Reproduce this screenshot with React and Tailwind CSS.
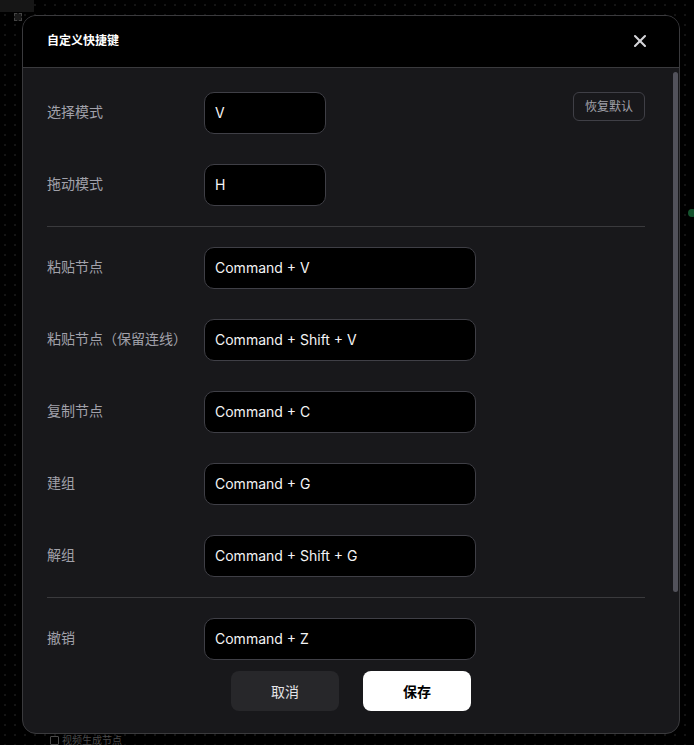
import { X } from 'lucide-react';

const groups = [
    [
        { label: '选择模式', value: 'V', short: true },
        { label: '拖动模式', value: 'H', short: true },
    ],
    [
        { label: '粘贴节点', value: 'Command + V' },
        { label: '粘贴节点（保留连线）', value: 'Command + Shift + V' },
        { label: '复制节点', value: 'Command + C' },
        { label: '建组', value: 'Command + G' },
        { label: '解组', value: 'Command + Shift + G' },
    ],
    [
        { label: '撤销', value: 'Command + Z' },
    ],
];

function Row({ label, value, short }) {
    return (
        <div className="flex items-center h-[42px]">
            <div className="w-[157px] shrink-0 pb-[4px] text-[14px] text-[#a1a1aa]">{label}</div>
            <div
                className={`${short ? 'w-[122px]' : 'w-[272px]'} h-[42px] flex items-center px-[10px] pb-[2px] bg-black border border-[#3f3f46] rounded-[10px] text-[14px] text-[#f4f4f5]`}
            >
                {value}
            </div>
        </div>
    );
}

export default function App() {
    return (
        <div
            className="relative w-[694px] h-[745px] overflow-hidden bg-black bg-[radial-gradient(#141414_1px,transparent_1px)] bg-[size:10px_10px]"
            style={{ fontFamily: 'Inter, "Noto Sans CJK SC", sans-serif' }}
        >
            {/* canvas bits behind the dialog */}
            <div className="absolute left-0 top-0 w-[34px] h-[12px] bg-[#161616]" />
            <div className="absolute left-[14px] top-[13px] w-[8px] h-[8px] border border-dashed border-[#444] bg-[#1a1a1a]" />
            <div className="absolute left-[50px] top-[734px] flex items-center gap-[3px] text-[10px] leading-[12px] text-[#4a4a4a]">
                <span className="w-[9px] h-[9px] border border-[#4a4a4a] rounded-[1px]" />
                视频生成节点
            </div>
            <div className="absolute left-[688px] top-[209px] w-[8px] h-[8px] rounded-full bg-[#14532d]" />

            <div className="relative ml-[22px] mt-[15px] w-[658px] h-[719px] flex flex-col rounded-[14px] border border-[#3a3a3d] bg-[#18181b] overflow-hidden">
                <div className="h-[52px] shrink-0 flex items-center justify-between pl-[24px] pr-[29px] pb-[2px] bg-black border-b border-[#3a3a3d]">
                    <span className="text-[12px] font-semibold text-white">自定义快捷键</span>
                    <X size={20} strokeWidth={2.5} className="text-[#d4d4d8]" />
                </div>

                <div className="relative h-[593px] shrink-0 overflow-hidden">
                    <div className="pl-[24px] pr-[34px] pt-[24px]">
                        {groups.map((rows, gi) => (
                            <div key={gi}>
                                {gi > 0 && <div className="my-[20px] h-px bg-[#3a3a3d]" />}
                                <div className="relative flex flex-col gap-[30px]">
                                    {rows.map((r) => (
                                        <Row key={r.label} {...r} />
                                    ))}
                                    {gi === 0 && (
                                        <button className="absolute right-0 top-0 h-[29px] w-[72px] rounded-[6px] border border-[#3f3f46] text-[12px] text-[#a1a1aa]">
                                            恢复默认
                                        </button>
                                    )}
                                </div>
                            </div>
                        ))}
                    </div>
                    <div className="absolute right-[1px] top-[4px] w-[5px] h-[520px] rounded-full bg-[#52525b]" />
                </div>

                <div className="flex justify-center gap-[24px] pt-[10px]">
                    <button className="w-[108px] h-[40px] rounded-[8px] bg-[#27272a] text-[14px] text-[#e4e4e7]">
                        取消
                    </button>
                    <button className="w-[108px] h-[40px] rounded-[8px] bg-white text-[14px] font-semibold text-black">
                        保存
                    </button>
                </div>
            </div>
        </div>
    );
}
